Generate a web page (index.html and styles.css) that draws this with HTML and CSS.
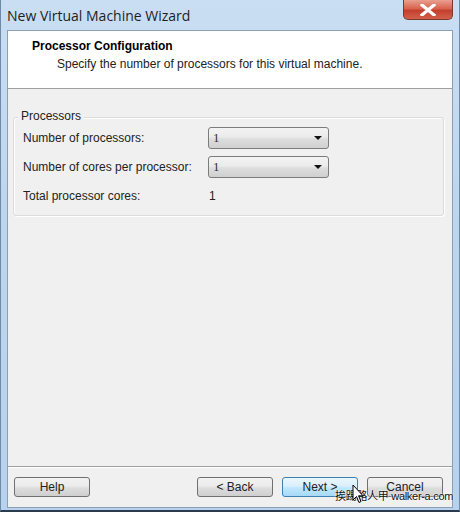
FILE: index.html
```html
<!DOCTYPE html>
<html>
<head>
<meta charset="utf-8">
<link rel="stylesheet" href="styles.css">
</head>
<body>
<div class="window">
  <div class="titlebar">
    <span class="title">New Virtual Machine Wizard</span>
    <div class="close">
      <svg width="16" height="12" viewBox="0 0 16 12"><path d="M2 1 L14 11 M14 1 L2 11" stroke="#fff" stroke-width="3.2" stroke-linecap="square"/></svg>
    </div>
  </div>
  <div class="client">
    <div class="header">
      <div class="h-title">Processor Configuration</div>
      <div class="h-sub">Specify the number of processors for this virtual machine.</div>
    </div>
    <div class="content">
      <div class="group">
        <div class="legend">Processors</div>
        <div class="row">
          <span class="label">Number of processors:</span>
          <div class="select"><span>1</span><i class="arrow"></i></div>
        </div>
        <div class="row">
          <span class="label">Number of cores per processor:</span>
          <div class="select"><span>1</span><i class="arrow"></i></div>
        </div>
        <div class="row plain">
          <span class="label">Total processor cores:</span>
          <span class="value">1</span>
        </div>
      </div>
    </div>
    <div class="footer">
      <div class="btn">Help</div>
      <div class="spacer"></div>
      <div class="btn">&lt; Back</div>
      <div class="btn next">Next &gt;</div>
      <div class="btn">Cancel</div>
    </div>
  </div>
  <div class="watermark">挨踢路人甲 walker-a.com</div>
  <svg class="cursor" width="12" height="20" viewBox="0 0 12 20"><path d="M1 1 L1 16 L4.5 12.5 L7 18.5 L9 17.5 L6.5 11.8 L11 11.8 Z" fill="#fff" stroke="#000" stroke-width="1" stroke-linejoin="round"/></svg>
</div>
</body>
</html>
```
FILE: styles.css
```css
html, body {
  margin: 0;
  padding: 0;
}
body {
  width: 460px;
  height: 512px;
  overflow: hidden;
  font-family: "Liberation Sans", Arial, sans-serif;
  font-size: 12px;
  color: #222;
}
.window {
  position: relative;
  width: 460px;
  height: 512px;
  box-sizing: border-box;
  background: linear-gradient(180deg, #c9def3 0%, #bdd6ef 40%, #b7d2ee 100%);
  display: flex;
  flex-direction: column;
  border-left: 1px solid #6f8aa8;
  border-right: 1px solid #6f8aa8;
  border-bottom: 2px solid #2b3a4d;
  padding: 0 6px 2px 6px;
}
.titlebar {
  height: 30px;
  display: flex;
  align-items: flex-start;
  position: relative;
}
.title {
  font-family: "Open Sans", sans-serif;
  font-size: 14px;
  color: #1e1e1e;
  padding-top: 6px;
}
.close {
  position: absolute;
  right: 0px;
  top: 0;
  width: 50px;
  height: 20px;
  border: 1px solid #7a3a30;
  border-top: none;
  border-radius: 0 0 5px 5px;
  background: linear-gradient(180deg, #e9a090 0%, #d9634f 45%, #c3402d 55%, #d4604a 100%);
  display: flex;
  align-items: center;
  justify-content: center;
  box-sizing: border-box;
}
.client {
  flex: 1;
  display: flex;
  flex-direction: column;
  background: #f0f0f0;
  border: 1px solid #8d9fb4;
}
.header {
  background: #fff;
  height: 58px;
  border-bottom: 1px solid #a0a0a0;
  box-sizing: border-box;
  padding: 8px 0 0 24px;
}
.h-title {
  font-weight: bold;
  font-size: 12px;
  color: #000;
}
.h-sub {
  margin-top: 4px;
  padding-left: 25px;
  color: #222;
}
.content {
  flex: 1;
  padding: 28px 8px 0 5px;
}
.group {
  position: relative;
  border: 1px solid #dcdcdc;
  border-radius: 3px;
  height: 99px;
  box-sizing: border-box;
  padding: 9px 0 0 9px;
  box-shadow: inset 1px 1px 0 #fff, 1px 1px 0 #fff;
}
.legend {
  position: absolute;
  top: -9px;
  left: 4px;
  padding: 0 3px;
  background: #f0f0f0;
  color: #222;
}
.row {
  display: flex;
  align-items: center;
  height: 22px;
  margin-bottom: 7px;
}
.row.plain {
  height: 14px;
  margin-top: 11px;
}
.label {
  width: 185px;
}
.select {
  width: 121px;
  height: 22px;
  box-sizing: border-box;
  border: 1px solid #7c7c7c;
  border-radius: 3px;
  background: linear-gradient(180deg, #f3f3f3 0%, #ebebeb 45%, #dddddd 55%, #d0d0d0 100%);
  display: flex;
  align-items: center;
  justify-content: space-between;
  padding: 0 6px 0 4px;
  font-family: "Liberation Serif", serif;
  font-size: 13px;
  color: #333;
}
.arrow {
  width: 0;
  height: 0;
  border-left: 4px solid transparent;
  border-right: 4px solid transparent;
  border-top: 4px solid #111;
}
.value {
  padding-left: 1px;
}
.footer {
  display: flex;
  align-items: center;
  border-top: 1px solid #a0a0a0;
  box-shadow: inset 0 1px 0 #fff;
  height: 41px;
  box-sizing: border-box;
  padding: 0 9px 1px 6px;
  gap: 9px;
}
.spacer {
  flex: 1;
}
.btn {
  width: 76px;
  height: 20px;
  box-sizing: border-box;
  border: 1px solid #707070;
  border-radius: 3px;
  background: linear-gradient(180deg, #f2f2f2 0%, #ebebeb 45%, #dddddd 55%, #cfcfcf 100%);
  display: flex;
  align-items: center;
  justify-content: center;
  color: #222;
}
.btn.next {
  border-color: #3c7fb1;
  background: linear-gradient(180deg, #eaf6fd 0%, #d9f0fc 45%, #bee6fd 55%, #a7d9f5 100%);
}
.watermark {
  position: absolute;
  left: 334px;
  top: 487px;
  font-size: 11px;
  white-space: nowrap;
  letter-spacing: -0.3px;
  color: #111;
  font-family: "Liberation Sans", "Noto Sans CJK TC", sans-serif;
  text-shadow: 0 0 2px #fff, 0 0 2px #fff;
}
.cursor {
  position: absolute;
  left: 351px;
  top: 484px;
}
```
